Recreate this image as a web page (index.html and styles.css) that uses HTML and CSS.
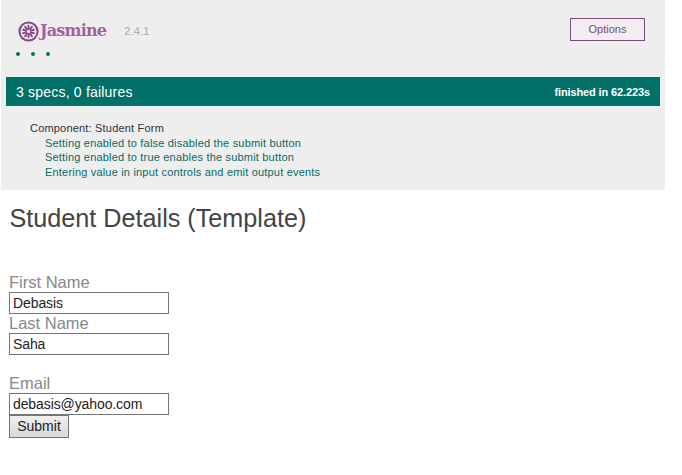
FILE: index.html
```html
<!DOCTYPE html>
<html lang="en">
<head>
<meta charset="utf-8">
<title>Jasmine</title>
<link rel="stylesheet" href="styles.css">
</head>
<body>
<div class="reporter">
  <div class="banner">
    <div class="brand">
      <svg class="logo" width="21" height="21" viewBox="0 0 20 20" aria-hidden="true">
        <circle cx="10" cy="10" r="8.6" fill="#f3e6f1" stroke="#8a4a84" stroke-width="2"/>
        <g stroke="#8a4a84" stroke-width="1.9" stroke-linecap="round">
          <path d="M10 4.6V7.6"/>
          <path d="M10 12.4V15.4"/>
          <path d="M4.9 8.3L7.7 9.2"/>
          <path d="M12.3 10.8L15.1 11.7"/>
          <path d="M6.8 14.4L8.6 11.9"/>
          <path d="M11.4 8.1L13.2 5.6"/>
          <path d="M6.8 5.6L8.6 8.1"/>
          <path d="M11.4 11.9L13.2 14.4"/>
          <path d="M4.9 11.7L7.7 10.8"/>
          <path d="M12.3 9.2L15.1 8.3"/>
        </g>
      </svg>
      <span class="title">Jasmine</span>
      <span class="version">2.4.1</span>
    </div>
    <button class="options" type="button">Options</button>
  </div>
  <div class="dots"><span class="dot"></span><span class="dot"></span><span class="dot"></span></div>
  <div class="bar">
    <span class="summary">3 specs, 0 failures</span>
    <span class="duration">finished in 62.223s</span>
  </div>
  <div class="results">
    <div class="suite">Component: Student Form</div>
    <ul class="specs">
      <li>Setting enabled to false disabled the submit button</li>
      <li>Setting enabled to true enables the submit button</li>
      <li>Entering value in input controls and emit output events</li>
    </ul>
  </div>
</div>
<main class="page">
  <h2 class="heading">Student Details (Template)</h2>
  <form class="form">
    <label class="label" for="first">First Name</label>
    <input class="field" id="first" type="text" value="Debasis">
    <label class="label" for="last">Last Name</label>
    <input class="field" id="last" type="text" value="Saha">
    <label class="label label-gap" for="email">Email</label>
    <input class="field" id="email" type="text" value="debasis@yahoo.com">
    <button class="submit" type="button">Submit</button>
  </form>
</main>
</body>
</html>
```
FILE: styles.css
```css
* { box-sizing: border-box; }
html, body { margin: 0; padding: 0; background: #fff; }
body { width: 682px; height: 475px; overflow: hidden; font-family: "Liberation Sans", Arial, sans-serif; color: #333; }
.reporter { width: 664px; height: 190px; margin-left: 1px; background: #eee; padding: 0 5px 0 5px; }
.banner { height: 46px; display: flex; justify-content: space-between; align-items: flex-start; padding-top: 18px; }
.brand { display: flex; align-items: center; padding-left: 12px; height: 26px; }
.logo { flex: none; }
.title { font-family: "DejaVu Serif", serif; font-weight: 700; font-size: 16px; letter-spacing: -0.8px; color: #a45f9e; margin-left: 1px; line-height: 26px; }
.version { font-size: 11px; color: #aaa; margin-left: 18px; letter-spacing: 0.2px; }
.options { width: 75px; height: 23px; margin-right: 15px; background: #f1edf1; border: 1px solid #7f4a7b; border-radius: 0; color: #7f4a7b; font: 11px "Liberation Sans", Arial, sans-serif; padding: 0 0 1px; }
.dots { height: 31px; display: flex; gap: 11px; padding: 6px 0 0 10px; }
.dot { width: 4px; height: 4px; border-radius: 50%; background: #007069; }
.bar { height: 29px; background: #007069; color: #fff; display: flex; justify-content: space-between; align-items: center; padding: 0 10px; }
.summary { font-size: 14px; letter-spacing: 0.2px; }
.duration { font-size: 11px; font-weight: 700; letter-spacing: -0.12px; }
.results { padding: 15px 0 0 24px; font-size: 11px; line-height: 14.5px; letter-spacing: 0.19px; }
.suite { color: #333; }
.specs { list-style: none; margin: 0; padding: 0 0 0 15px; color: #0a6a64; }
.page { padding: 0 9px; }
.heading { margin: 0; padding: 14px 0 0 0.5px; font-size: 25.2px; font-weight: 400; line-height: 28px; color: #444; height: 83px; }
.form { display: flex; flex-direction: column; align-items: flex-start; }
.label { font-size: 16.5px; line-height: 19px; color: #888; display: block; }
.label-gap { margin-top: 19px; }
.field { width: 160px; height: 22px; border: 1px solid #767676; padding: 0 3px; font: 14px "Liberation Sans", Arial, sans-serif; letter-spacing: -0.1px; color: #222; background: #fff; border-radius: 0; margin: 0; }
.submit { width: 60px; height: 23px; background: linear-gradient(#f0f0f0, #d8d8d8); border: 1px solid #767676; border-radius: 0; font: 14px "Liberation Sans", Arial, sans-serif; color: #222; padding: 0 0 2px; }
```
